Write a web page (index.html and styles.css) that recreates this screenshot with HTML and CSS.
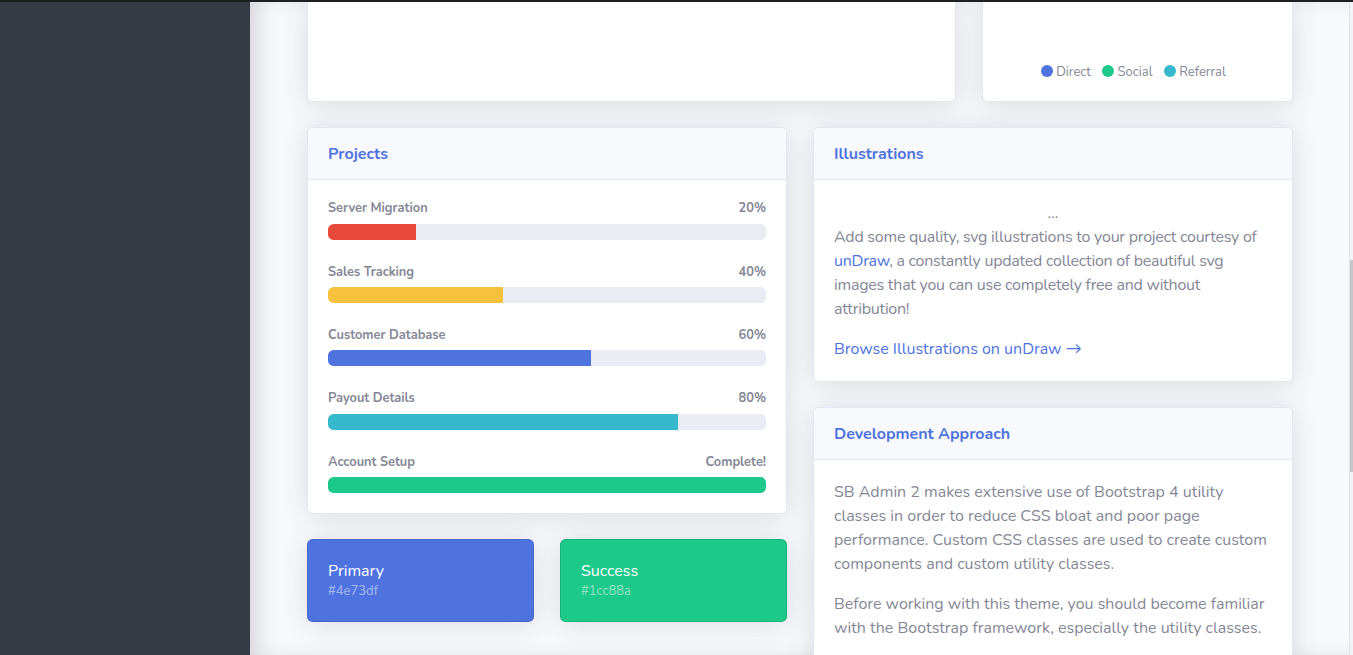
FILE: index.html
```html
<!DOCTYPE html>
<html>
<head>
<meta charset="utf-8">
<link rel="stylesheet" href="styles.css">
</head>
<body>
<div class="app">
  <aside class="sidebar"></aside>
  <main class="content">
    <div class="row">
      <div class="col col-8">
        <div class="card card-cut"></div>
      </div>
      <div class="col col-4">
        <div class="card card-cut legend-card">
          <div class="legend">
            <span class="legend-item"><i class="dot dot-primary"></i> Direct</span>
            <span class="legend-item"><i class="dot dot-success"></i> Social</span>
            <span class="legend-item"><i class="dot dot-info"></i> Referral</span>
          </div>
        </div>
      </div>
    </div>
    <div class="row">
      <div class="col col-6">
        <div class="card">
          <div class="card-header"><h6 class="card-title">Projects</h6></div>
          <div class="card-body">
            <h4 class="prog-label">Server Migration <span>20%</span></h4>
            <div class="progress"><div class="bar bar-danger" style="width:20%"></div></div>
            <h4 class="prog-label">Sales Tracking <span>40%</span></h4>
            <div class="progress"><div class="bar bar-warning" style="width:40%"></div></div>
            <h4 class="prog-label">Customer Database <span>60%</span></h4>
            <div class="progress"><div class="bar bar-primary" style="width:60%"></div></div>
            <h4 class="prog-label">Payout Details <span>80%</span></h4>
            <div class="progress"><div class="bar bar-info" style="width:80%"></div></div>
            <h4 class="prog-label">Account Setup <span>Complete!</span></h4>
            <div class="progress last"><div class="bar bar-success" style="width:100%"></div></div>
          </div>
        </div>
        <div class="row">
          <div class="col col-6">
            <div class="card color-card bg-primary">
              <div class="color-name">Primary</div>
              <div class="color-hex">#4e73df</div>
            </div>
          </div>
          <div class="col col-6">
            <div class="card color-card bg-success">
              <div class="color-name">Success</div>
              <div class="color-hex">#1cc88a</div>
            </div>
          </div>
        </div>
      </div>
      <div class="col col-6">
        <div class="card">
          <div class="card-header"><h6 class="card-title">Illustrations</h6></div>
          <div class="card-body">
            <div class="img-alt">...</div>
            <p class="tight">Add some quality, svg illustrations to your project courtesy of <a href="#">unDraw</a>, a constantly updated collection of beautiful svg images that you can use completely free and without attribution!</p>
            <a class="browse" href="#">Browse Illustrations on unDraw &rarr;</a>
          </div>
        </div>
        <div class="card">
          <div class="card-header"><h6 class="card-title">Development Approach</h6></div>
          <div class="card-body">
            <p>SB Admin 2 makes extensive use of Bootstrap 4 utility classes in order to reduce CSS bloat and poor page performance. Custom CSS classes are used to create custom components and custom utility classes.</p>
            <p>Before working with this theme, you should become familiar with the Bootstrap framework, especially the utility classes.</p>
          </div>
        </div>
      </div>
    </div>
  </main>
  <div class="scrollbar"><div class="thumb"></div></div>
</div>
</body>
</html>
```
FILE: styles.css
```css
* { box-sizing: border-box; }
html, body { margin: 0; padding: 0; height: 100%; }
body {
  font-family: Nunito, Lato, "Noto Sans", sans-serif;
  font-size: 16px;
  line-height: 1.5;
  color: #858796;
  background: #f8f9fc;
  border-top: 2px solid #1e1f22;
  overflow: hidden;
}
.app { display: flex; height: 100%; }
.sidebar {
  width: 250px;
  flex: 0 0 250px;
  background: #363a42;
  position: relative;
  z-index: 2;
}
.content {
  flex: 1;
  min-width: 0;
  padding: 0 56px 0 57px;
  background: #f8f9fc;
  box-shadow: inset 14px 0 24px -8px rgba(58,59,69,.2);
}
.scrollbar {
  width: 4px;
  flex: 0 0 4px;
  background: #f3f3f5;
  border-left: 1px solid #e3e3e6;
}
.thumb {
  margin-top: 258px;
  height: 212px;
  background: #c6c6c8;
}
.row { display: flex; margin: 0 -13px; }
.col { padding: 0 13px; }
.col-8 { width: 66.6667%; }
.col-4 { width: 33.3333%; }
.col-6 { width: 50%; }

.card {
  background: #fff;
  border: 1px solid #e3e6f0;
  border-radius: 5.6px;
  box-shadow: 0 2.4px 28px 0 rgba(58,59,69,.15);
  margin-bottom: 25px;
  overflow: hidden;
}
.card-cut {
  height: 100px;
  border-top: 0;
  border-radius: 0 0 5.6px 5.6px;
}
.legend-card {
  display: flex;
  flex-direction: column;
  justify-content: flex-end;
  padding: 0 20px 19px;
}
.legend {
  text-align: center;
  font-size: 13px;
  line-height: 19px;
}
.legend-item { margin-right: 8px; }
.dot {
  display: inline-block;
  width: 12px;
  height: 12px;
  border-radius: 50%;
  vertical-align: -1px;
}
.dot-primary { background: #4e73df; }
.dot-success { background: #1cc88a; }
.dot-info { background: #36b9cc; }

.card-header {
  background: #f8f9fc;
  border-bottom: 1px solid #e3e6f0;
  padding: 17px 20px 15px;
}
.card-title {
  margin: 0;
  font-size: 16px;
  line-height: 1.2;
  font-weight: 700;
  color: #4e73df;
}
.card-body { padding: 20px; }
.prog-label {
  display: flex;
  justify-content: space-between;
  margin: 0 0 8px;
  padding-top: 1px;
  font-size: 12.8px;
  line-height: 14.4px;
  font-weight: 700;
  color: #858796;
}
.progress {
  height: 16px;
  background: #eaecf4;
  border-radius: 5.6px;
  overflow: hidden;
  margin-bottom: 24px;
}
.progress.last { margin-bottom: 0; }
.bar { height: 100%; }
.bar-danger { background: #e74a3b; }
.bar-warning { background: #f6c23e; }
.bar-primary { background: #4e73df; }
.bar-info { background: #36b9cc; }
.bar-success { background: #1cc88a; }

.color-card {
  padding: 19px 20px 21px;
  color: #fff;
  border-color: rgba(0,0,0,.1);
}
.bg-primary { background: #4e73df; }
.bg-success { background: #1cc88a; }
.color-name { font-size: 16px; line-height: 24px; }
.color-hex { font-size: 13px; line-height: 17px; color: rgba(255,255,255,.5); }

.img-alt { text-align: center; line-height: 24px; padding-top: 1px; }
p { margin: 0 0 16px; }
.tight { letter-spacing: -0.25px; }
a { color: #4e73df; text-decoration: none; }
.browse { display: inline-block; }
```
